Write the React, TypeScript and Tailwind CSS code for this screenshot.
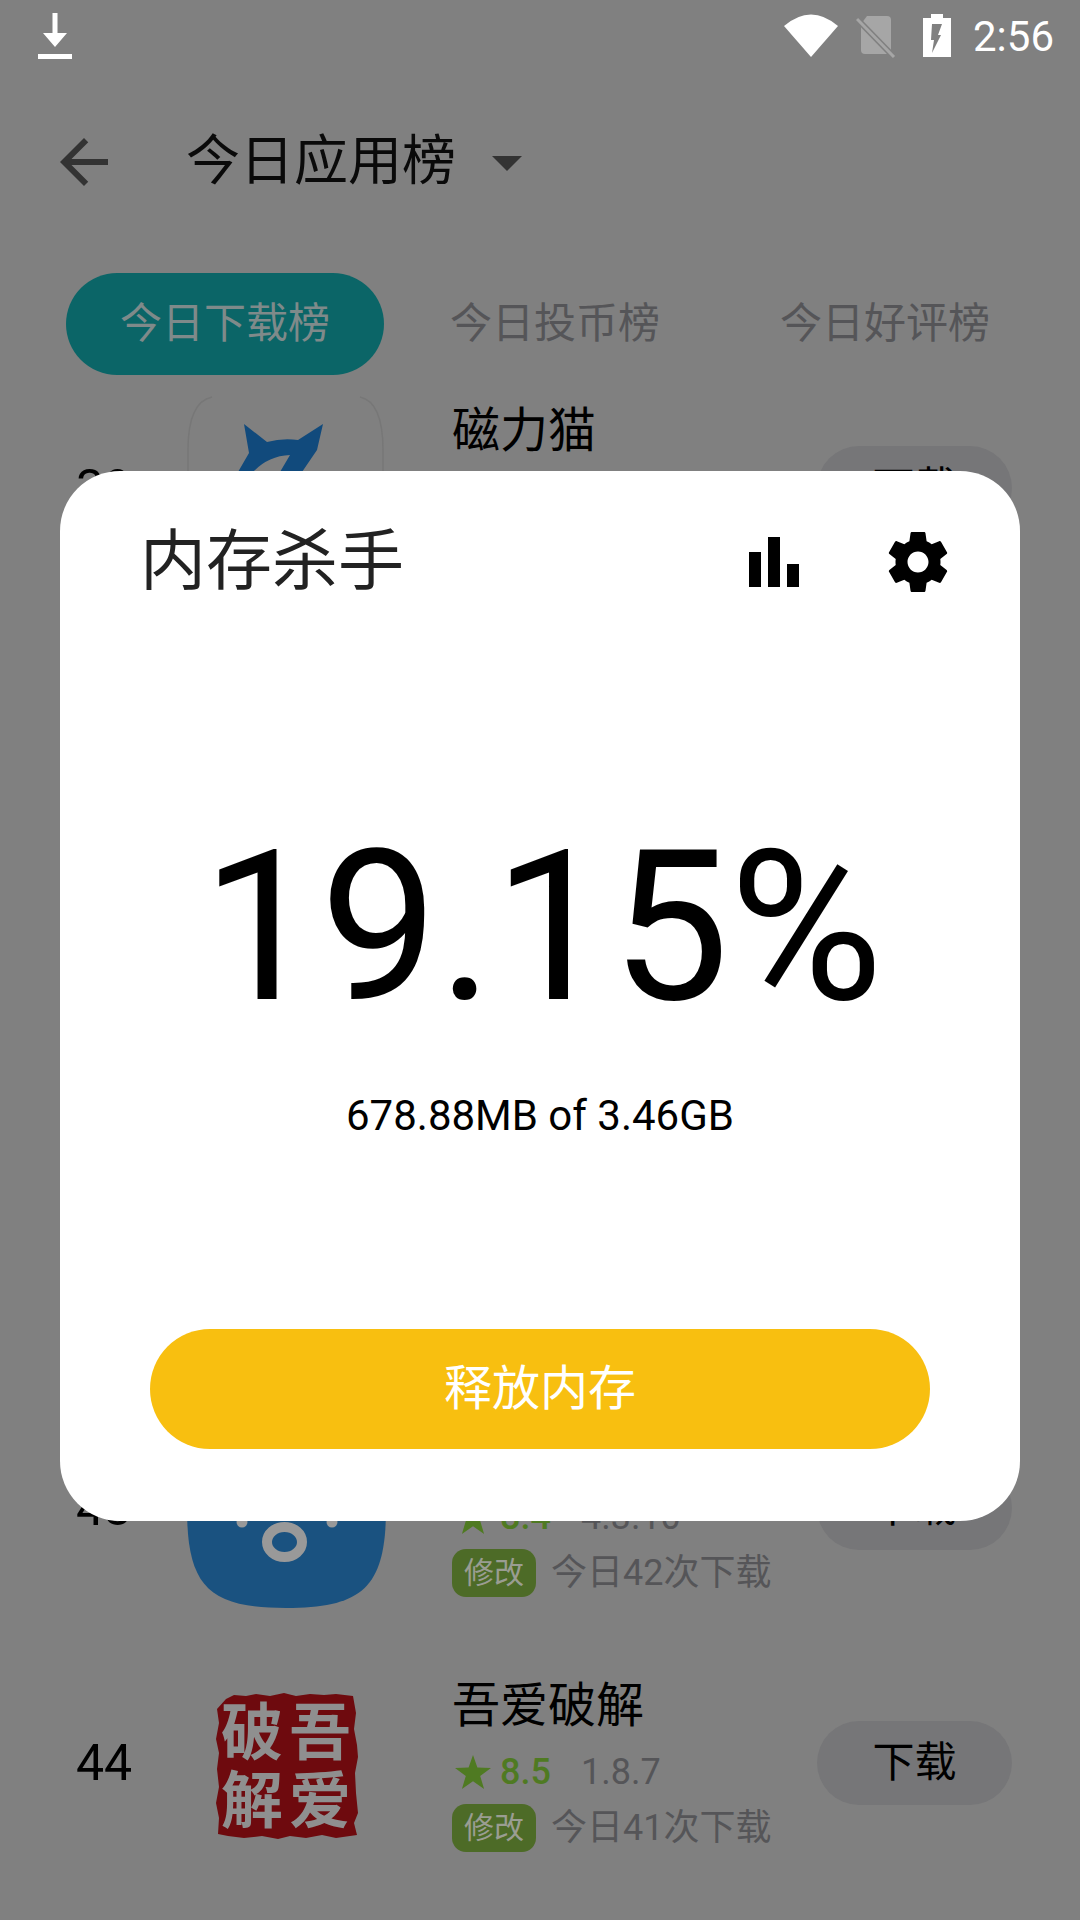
import React from "react";

const Star = () => (
  <svg width="36" height="34" viewBox="0 0 36 34" className="shrink-0">
    <polygon points="18,0 22.4,12.6 36,12.9 25.2,21 29.1,34 18,26.3 6.9,34 10.8,21 0,12.9 13.6,12.6" fill="#4f7a22" />
  </svg>
);

const CatIcon = () => (
  <svg width="200" height="200" viewBox="0 0 200 200" className="shrink-0">
    <path d="M2 195 V62 Q2 14 26 9 M174 9 Q197 14 197 62 V195" fill="none" stroke="#777777" strokeWidth="1.5" />
    <path d="M58 36 L81 54 Q96 50 112 52 L137 36 L131 62 L116 84 L100 110 L78 110 L94 84 L104 67 Q82 68 67 84 L52 110 L40 110 L52 84 L63 65 Z" fill="#114a7c" />
  </svg>
);

const BlueIcon = () => (
  <svg width="200" height="200" viewBox="0 0 200 200" className="shrink-0">
    <path d="M1 100 C1 178 22 200 100 200 C178 200 200 178 200 100 C200 22 178 0 100 0 C22 0 1 22 1 100 Z" fill="#1a5280" />
    <ellipse cx="98.5" cy="134" rx="17.5" ry="15" fill="none" stroke="#999999" strokeWidth="10" />
    <circle cx="56" cy="114" r="5.5" fill="#999999" />
    <circle cx="146" cy="114" r="5.5" fill="#999999" />
  </svg>
);

const SealIcon = () => (
  <svg width="200" height="200" viewBox="0 0 200 200" className="shrink-0">
    <polygon
      points="40,36 48,32 60,33 70,31 84,33 98,30 110,33 124,31 138,32 150,31 167,33 170,50 168,66 171,82 172,94 169,110 170,130 172,150 168,160 171,172 150,175 136,172 120,175 104,173 92,176 76,173 58,175 42,173 32,171 33,155 30,140 33,124 31,106 33,90 30,76 33,60 31,46"
      fill="#6e0a0e"
    />
    <g fill="#8f8f8f" fontSize="62" fontWeight="700" textAnchor="middle" fontFamily="'Noto Sans CJK SC', sans-serif">
      <text x="134" y="92">吾</text>
      <text x="134" y="160">爱</text>
      <text x="66" y="92">破</text>
      <text x="66" y="160">解</text>
    </g>
  </svg>
);

type RowProps = {
  no: string;
  icon: React.ReactNode;
  name?: string;
  score?: string;
  version?: string;
  count?: string;
};

const Row = ({ no, icon, name, score, version, count }: RowProps) => (
  <div className="flex h-[255px] items-center pl-[76px] pr-[68px]">
    <div className="w-[110px] shrink-0 text-[50px] leading-[60px] text-black">{no}</div>
    {icon}
    <div className="ml-[66px] flex h-[180px] flex-col">
      <div className="h-[66px] text-[48px] leading-[66px] text-black">{name}</div>
      <div className="flex h-[66px] items-center">
        {score && (
          <>
            <span className="ml-[3px] mr-[9px] flex">
              <Star />
            </span>
            <span className="text-[36px] font-medium text-[#4f7a22]">{score}</span>
            <span className="ml-[30px] text-[36px] text-[#555558]">{version}</span>
          </>
        )}
      </div>
      {count && (
        <div className="-mt-px flex h-[48px] items-center">
          <span className="flex h-[48px] w-[84px] items-center justify-center rounded-[14px] bg-[#4d6b27] text-[30px] leading-none text-[#9a9d92]">
            修改
          </span>
          <span className="ml-[15px] text-[36px] leading-[48px] text-[#555558]">{count}</span>
        </div>
      )}
    </div>
    <div className="ml-auto flex h-[84px] w-[195px] shrink-0 items-center justify-center rounded-[42px] bg-[#767678] text-[42px] leading-none text-black">
      下载
    </div>
  </div>
);

export default function App() {
  return (
    <div className="relative h-[1920px] w-[1080px] overflow-hidden bg-[#808080] font-['Roboto','Noto_Sans_CJK_SC',sans-serif]">
      {/* status bar */}
      <div className="flex h-[72px] items-start pl-[38px] pr-[26px]">
        <svg width="34" height="46" viewBox="0 0 34 46" className="mt-[13px]">
          <path d="M14.5 0 H19.5 V20 H29 L17 34 L5 20 H14.5 Z" fill="#ffffff" />
          <rect x="0" y="41" width="34" height="5" fill="#ffffff" />
        </svg>
        <svg width="54" height="43" viewBox="0 0 54 43" className="ml-auto mt-[14px]">
          <path d="M0 12 Q27 -11 54 12 L27 43 Z" fill="#ffffff" />
        </svg>
        <svg width="40" height="42" viewBox="0 0 40 42" className="ml-[18px] mt-[16px]">
          <path d="M11 0 H31 Q35 0 35 4 V38 H9 Q5 38 5 34 V8 Z" fill="#a6a6a6" />
          <path d="M0 2 L38 41" stroke="#808080" strokeWidth="6" />
          <path d="M1 3 L38 41" stroke="#a6a6a6" strokeWidth="3" />
        </svg>
        <svg width="28" height="43" viewBox="0 0 28 43" className="ml-[27px] mt-[14px]">
          <path d="M8 0 H20 V4 H28 V43 H0 V4 H8 Z" fill="#ffffff" />
          <polygon points="9,10 19,10 15,21 18,21 9,39 11,26 8,26" fill="#808080" />
        </svg>
        <span className="ml-[22px] mt-[7px] text-[42px] leading-[60px] text-white">2:56</span>
      </div>

      {/* header */}
      <div className="flex h-[180px] items-center pl-[48px]">
        <svg width="72" height="72" viewBox="0 0 24 24">
          <path d="M20 11H7.83l5.59-5.59L12 4l-8 8 8 8 1.41-1.41L7.83 13H20v-2z" fill="#333333" />
        </svg>
        <span className="ml-[66px] text-[54px] leading-none text-[#0a0a0a]">今日应用榜</span>
        <svg width="30" height="15" viewBox="0 0 30 15" className="ml-[36px] mt-[2px]">
          <polygon points="0,0 30,0 15,15" fill="#333333" />
        </svg>
      </div>

      {/* tabs */}
      <div className="flex gap-[12px] pl-[66px] pt-[21px]">
        <div className="flex h-[102px] w-[318px] items-center justify-center rounded-[51px] bg-[#0b6567] text-[42px] leading-none text-[#7f8a8a]">
          今日下载榜
        </div>
        <div className="flex h-[102px] w-[318px] items-center justify-center text-[42px] leading-none text-[#555558]">
          今日投币榜
        </div>
        <div className="flex h-[102px] w-[318px] items-center justify-center text-[42px] leading-none text-[#555558]">
          今日好评榜
        </div>
      </div>

      {/* list */}
      <div className="-mt-[15px]">
        <Row no="39" icon={<CatIcon />} name="磁力猫" />
        <div className="h-[765px]" />
        <Row no="43" icon={<BlueIcon />} score="8.4" version="4.3.10" count="今日42次下载" />
        <Row no="44" icon={<SealIcon />} name="吾爱破解" score="8.5" version="1.8.7" count="今日41次下载" />
      </div>

      {/* modal */}
      <div className="absolute left-[60px] top-[471px] flex h-[1050px] w-[960px] flex-col rounded-[60px] bg-white pt-[46px]">
        <div className="flex h-[90px] items-center pl-[80px]">
          <span className="text-[66px] leading-[90px] text-[#222222]">内存杀手</span>
          <svg width="50" height="50" viewBox="0 0 50 50" className="ml-auto">
            <rect x="0" y="15" width="12" height="35" fill="#000000" />
            <rect x="19" y="0" width="12" height="50" fill="#000000" />
            <rect x="38" y="27" width="12" height="23" fill="#000000" />
          </svg>
          <svg width="72" height="72" viewBox="0 0 24 24" className="ml-[83px] mr-[66px]">
            <path
              d="M19.43 12.98c.04-.32.07-.64.07-.98s-.03-.66-.07-.98l2.11-1.65c.19-.15.24-.42.12-.64l-2-3.46c-.12-.22-.39-.3-.61-.22l-2.49 1c-.52-.4-1.08-.73-1.69-.98l-.38-2.65C14.46 2.18 14.25 2 14 2h-4c-.25 0-.46.18-.49.42l-.38 2.65c-.61.25-1.17.59-1.69.98l-2.49-1c-.23-.09-.49 0-.61.22l-2 3.46c-.13.22-.07.49.12.64l2.11 1.65c-.04.32-.07.65-.07.98s.03.66.07.98l-2.11 1.65c-.19.15-.24.42-.12.64l2 3.46c.12.22.39.3.61.22l2.49-1c.52.4 1.08.73 1.69.98l.38 2.65c.03.24.24.42.49.42h4c.25 0 .46-.18.49-.42l.38-2.65c.61-.25 1.17-.59 1.69-.98l2.49 1c.23.09.49 0 .61-.22l2-3.46c.12-.22.07-.49-.12-.64l-2.11-1.65zM12 15.5c-1.93 0-3.5-1.57-3.5-3.5s1.57-3.5 3.5-3.5 3.5 1.57 3.5 3.5-1.57 3.5-3.5 3.5z"
              fill="#000000"
            />
          </svg>
        </div>
        <div className="mt-[215px] h-[210px] pl-[5px] text-center text-[210px] leading-[210px] text-black">19.15%</div>
        <div className="mt-[54px] h-[60px] text-center text-[42px] leading-[60px] text-black">678.88MB of 3.46GB</div>
        <div className="mx-[90px] mt-[183px] flex h-[120px] items-center justify-center rounded-[60px] bg-[#f8bf10] text-[48px] leading-none text-white">
          释放内存
        </div>
      </div>
    </div>
  );
}
